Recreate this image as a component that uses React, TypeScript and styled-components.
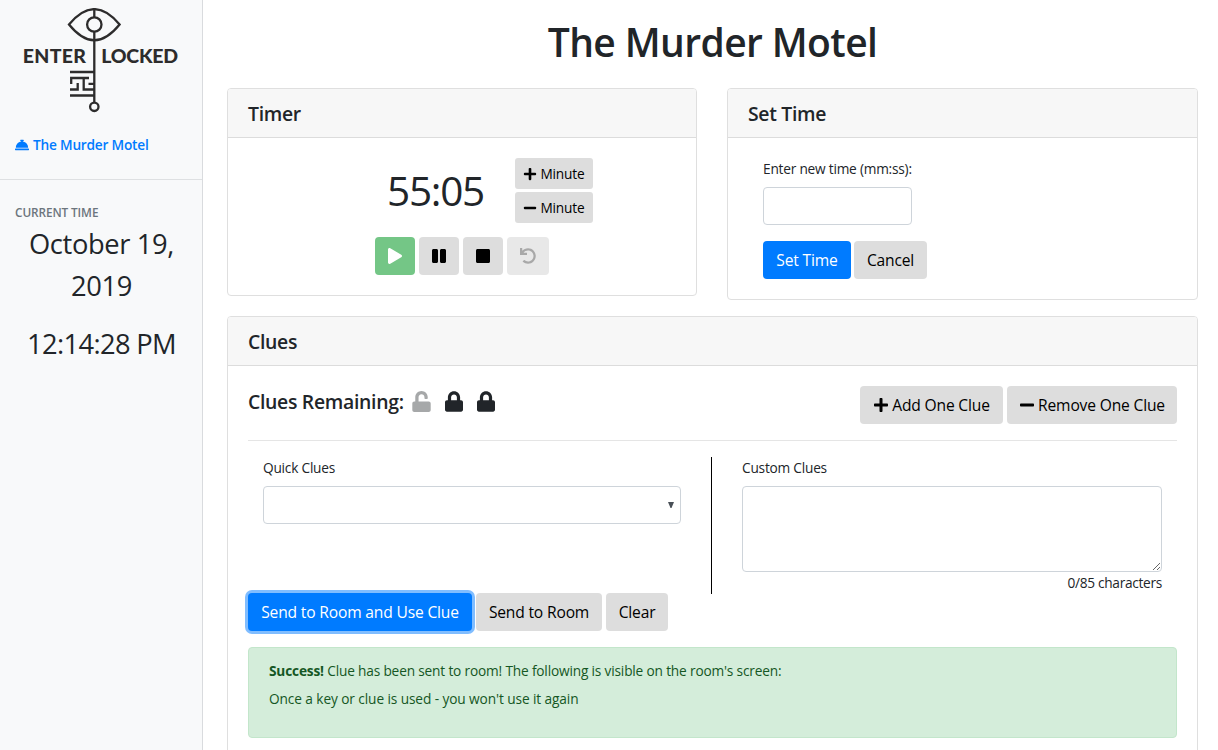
import React from "react";
import styled, { createGlobalStyle, css } from "styled-components";
import { FaConciergeBell, FaLock, FaMinus, FaPause, FaPlay, FaPlus, FaStop, FaUndo, FaUnlock } from "react-icons/fa";

const GlobalStyle = createGlobalStyle`
  *, *::before, *::after { box-sizing: border-box; }
  body {
    margin: 0;
    height: 750px;
    overflow: hidden;
    background: #fff;
    color: #212529;
    font-family: "Open Sans", "Noto Sans", sans-serif;
    font-size: 13.7px;
    line-height: 21px;
    letter-spacing: -0.22px;
  }
  h1, h2, h3, p { margin: 0; }
`;

const Page = styled.div`
  display: flex;
  height: 750px;
  overflow: hidden;
`;

/* Sidebar */

const Sidebar = styled.aside`
  flex: 0 0 203px;
  background: #f8f9fa;
  border-right: 1px solid #d9dbde;
`;

const Brand = styled.div`
  height: 180px;
  padding: 8px 15px 0;
  border-bottom: 1px solid #dee0e2;
`;

const LogoDrawing = styled.svg`
  display: block;
  margin: 0 0 21px 6px;
`;

const RoomLink = styled.a`
  display: flex;
  align-items: center;
  gap: 4px;
  color: #007bff;
  font-weight: 600;
  line-height: 22px;
  letter-spacing: -0.22px;
  text-decoration: none;
  white-space: nowrap;
`;

const Clock = styled.section`
  padding: 21px 14px 0 15px;
`;

const ClockLabel = styled.h3`
  color: #6c757d;
  font-size: 11.8px;
  font-weight: 600;
  line-height: 22px;
  letter-spacing: -0.1px;
  text-transform: uppercase;
`;

const ClockValue = styled.p<{ $track: number }>`
  margin-bottom: 16px;
  font-size: 27.3px;
  line-height: 42px;
  letter-spacing: ${(p) => p.$track}px;
  text-align: center;
`;

/* Main area */

const Main = styled.main`
  flex: 1;
  padding: 18px 20px 0 24px;
`;

const Title = styled.h1`
  margin-bottom: 22px;
  font-size: 39px;
  font-weight: 600;
  line-height: 48px;
  letter-spacing: -0.6px;
  text-align: center;
`;

const TopRow = styled.div`
  display: grid;
  grid-template-columns: 470px 471px;
  align-items: start;
  gap: 30px;
  margin-bottom: 16px;
`;

const Card = styled.section<{ $height: number }>`
  height: ${(p) => p.$height}px;
  border: 1px solid #dfdfdf;
  border-radius: 4px;
  background: #fff;
`;

const CardHeader = styled.header`
  height: 49px;
  padding: 12px 20px;
  border-bottom: 1px solid #dcdcdc;
  border-radius: 3px 3px 0 0;
  background: #f7f7f7;
`;

const CardTitle = styled.h2`
  font-size: 19.4px;
  font-weight: 600;
  line-height: 26px;
  letter-spacing: -0.3px;
`;

const CardBody = styled.div<{ $inset?: number }>`
  padding: 20px ${(p) => p.$inset ?? 20}px 0;
`;

const Button = styled.button<{ $w: number; $tone?: "primary" | "success"; $small?: boolean; $faded?: boolean; $focused?: boolean }>`
  display: inline-flex;
  align-items: center;
  justify-content: center;
  gap: 3px;
  width: ${(p) => p.$w}px;
  height: ${(p) => (p.$small ? 31 : 38)}px;
  padding: 0;
  border: 0;
  border-radius: ${(p) => (p.$small ? 3 : 4)}px;
  background: #ddd;
  color: #000;
  font-family: inherit;
  font-size: ${(p) => (p.$small ? 13.7 : 15.6)}px;
  line-height: 24px;
  letter-spacing: -0.17px;
  white-space: nowrap;
  ${(p) => p.$tone === "primary" && css`background: #007bff; color: #fff;`}
  ${(p) => p.$tone === "success" && css`background: #74c686; color: #fff;`}
  ${(p) => p.$faded && css`background: #e8e8e8; color: #a8a8a8;`}
  ${(p) => p.$focused && css`box-shadow: 0 0 0 3px #80bdff;`}
`;

const ButtonRow = styled.div<{ $gap?: number }>`
  display: flex;
  gap: ${(p) => p.$gap ?? 4}px;
`;

const TimerTop = styled.div`
  display: flex;
  padding-left: 139px;
  margin-bottom: 13px;
`;

const Countdown = styled.div`
  width: 128px;
  font-size: 40.5px;
  line-height: 66px;
  letter-spacing: -1.25px;
`;

const Steppers = styled.div`
  display: flex;
  flex-direction: column;
  gap: 3px;
`;

const TimerControls = styled(ButtonRow)`
  padding-left: 127px;
`;

const Label = styled.label`
  display: block;
  margin-bottom: 7px;
  line-height: 22px;
`;

const fieldStyle = css`
  display: block;
  border: 1px solid #ced4da;
  border-radius: 4px;
  background: #fff;
  color: #495057;
  font: inherit;
  outline: 0;
`;

const TimeInput = styled.input`
  ${fieldStyle}
  width: 149px;
  height: 38px;
  margin-bottom: 16px;
`;

const ClueStatus = styled.div`
  display: flex;
  align-items: flex-start;
  height: 55px;
  margin-bottom: 16px;
  border-bottom: 1px solid #e5e5e5;
`;

const Remaining = styled(CardTitle)`
  width: 164px;
  padding-top: 3px;
`;

const Locks = styled.div`
  display: flex;
  flex: 1;
  gap: 14px;
  padding-top: 5px;
  font-size: 21px;

  svg { width: 18px; }
  svg:first-child { width: 19px; color: #a6a8a9; }
`;

const ClueColumns = styled.div`
  display: grid;
  grid-template-columns: 464px 1fr;
  height: 136px;
`;

const QuickColumn = styled.div`
  padding: 0 30px 0 15px;
  border-right: 1px solid #000;
`;

const CustomColumn = styled.div`
  padding: 0 15px 0 30px;
`;

const SelectBox = styled.div`
  ${fieldStyle}
  display: flex;
  align-items: center;
  justify-content: flex-end;
  height: 38px;
  padding-right: 6px;
`;

const ClueText = styled.textarea`
  ${fieldStyle}
  width: 420px;
  height: 86px;
  resize: vertical;
`;

const Counter = styled.div`
  line-height: 22px;
  letter-spacing: -0.3px;
  text-align: right;
`;

const Alert = styled.div`
  height: 91px;
  margin-top: 16px;
  padding: 12px 20px;
  border: 1px solid #c3e6cb;
  border-radius: 4px;
  background: #d4edda;
  color: #155724;
  line-height: 21px;

  p { letter-spacing: -0.175px; }
  p + p { margin-top: 7px; letter-spacing: -0.1px; }
`;

function Logo() {
  return (
    <LogoDrawing width="160" height="105" viewBox="21 8 160 105" fill="none" stroke="#2d2c2c" strokeWidth="2.3">
      <path d="M69 24.5C86 4 102.600 4 119.600 24.5C102.600 45.500 86 45.500 69 24.500Z" />
      <circle cx="94.300" cy="24.500" r="7.200" />
      <path d="M94.300 9V17M94.300 32V102.500" />
      <circle cx="94.300" cy="106.800" r="4.200" />
      <path d="M70 72H94M70 95.500H94M71.200 84V78H89M83.700 78V89.500H94M77.700 83V89.500H70M88.500 83.800H94" />
      <g fill="#2d2c2c" stroke="none" fontFamily="Lato, sans-serif" fontWeight="900" fontSize="19.500">
        <text x="22.800" y="63.300" textLength="63">ENTER</text>
        <text x="101.300" y="63.300" textLength="76.500">LOCKED</text>
      </g>
    </LogoDrawing>
  );
}

export default function App() {
  return (
    <>
      <GlobalStyle />
      <Page>
        <Sidebar>
          <Brand>
            <Logo />
            <RoomLink><FaConciergeBell size={14} />The Murder Motel</RoomLink>
          </Brand>
          <Clock>
            <ClockLabel>Current time</ClockLabel>
            <ClockValue $track={-0.35}>October 19, 2019</ClockValue>
            <ClockValue $track={-0.65}>12:14:28 PM</ClockValue>
          </Clock>
        </Sidebar>
        <Main>
          <Title>The Murder Motel</Title>
          <TopRow>
            <Card $height={208}>
              <CardHeader><CardTitle>Timer</CardTitle></CardHeader>
              <CardBody>
                <TimerTop>
                  <Countdown>55:05</Countdown>
                  <Steppers>
                    <Button $w={78} $small><FaPlus size={14} />Minute</Button>
                    <Button $w={78} $small><FaMinus size={14} />Minute</Button>
                  </Steppers>
                </TimerTop>
                <TimerControls>
                  <Button $w={40} $tone="success"><FaPlay size={16} /></Button>
                  <Button $w={40}><FaPause size={16} /></Button>
                  <Button $w={40}><FaStop size={16} /></Button>
                  <Button $w={42} $faded><FaUndo size={16} /></Button>
                </TimerControls>
              </CardBody>
            </Card>
            <Card $height={212}>
              <CardHeader><CardTitle>Set Time</CardTitle></CardHeader>
              <CardBody $inset={35}>
                <Label htmlFor="new-time">Enter new time (mm:ss):</Label>
                <TimeInput id="new-time" />
                <ButtonRow $gap={3}>
                  <Button $w={88} $tone="primary">Set Time</Button>
                  <Button $w={73}>Cancel</Button>
                </ButtonRow>
              </CardBody>
            </Card>
          </TopRow>
          <Card $height={480}>
            <CardHeader><CardTitle>Clues</CardTitle></CardHeader>
            <CardBody>
              <ClueStatus>
                <Remaining>Clues Remaining:</Remaining>
                <Locks><FaUnlock /><FaLock /><FaLock /></Locks>
                <ButtonRow>
                  <Button $w={143}><FaPlus size={16} />Add One Clue</Button>
                  <Button $w={170}><FaMinus size={16} />Remove One Clue</Button>
                </ButtonRow>
              </ClueStatus>
              <ClueColumns>
                <QuickColumn>
                  <Label>Quick Clues</Label>
                  <SelectBox>
                    <svg width="6" height="6" viewBox="0 0 6 6"><path d="M0 0H6L3.500 6H2.500Z" fill="#495057" /></svg>
                  </SelectBox>
                </QuickColumn>
                <CustomColumn>
                  <Label htmlFor="custom-clue">Custom Clues</Label>
                  <ClueText id="custom-clue" />
                  <Counter>0/85 characters</Counter>
                </CustomColumn>
              </ClueColumns>
              <ButtonRow>
                <Button $w={224} $tone="primary" $focused>Send to Room and Use Clue</Button>
                <Button $w={126}>Send to Room</Button>
                <Button $w={62}>Clear</Button>
              </ButtonRow>
              <Alert>
                <p><strong>Success!</strong> Clue has been sent to room! The following is visible on the room's screen:</p>
                <p>Once a key or clue is used - you won't use it again</p>
              </Alert>
            </CardBody>
          </Card>
        </Main>
      </Page>
    </>
  );
}
